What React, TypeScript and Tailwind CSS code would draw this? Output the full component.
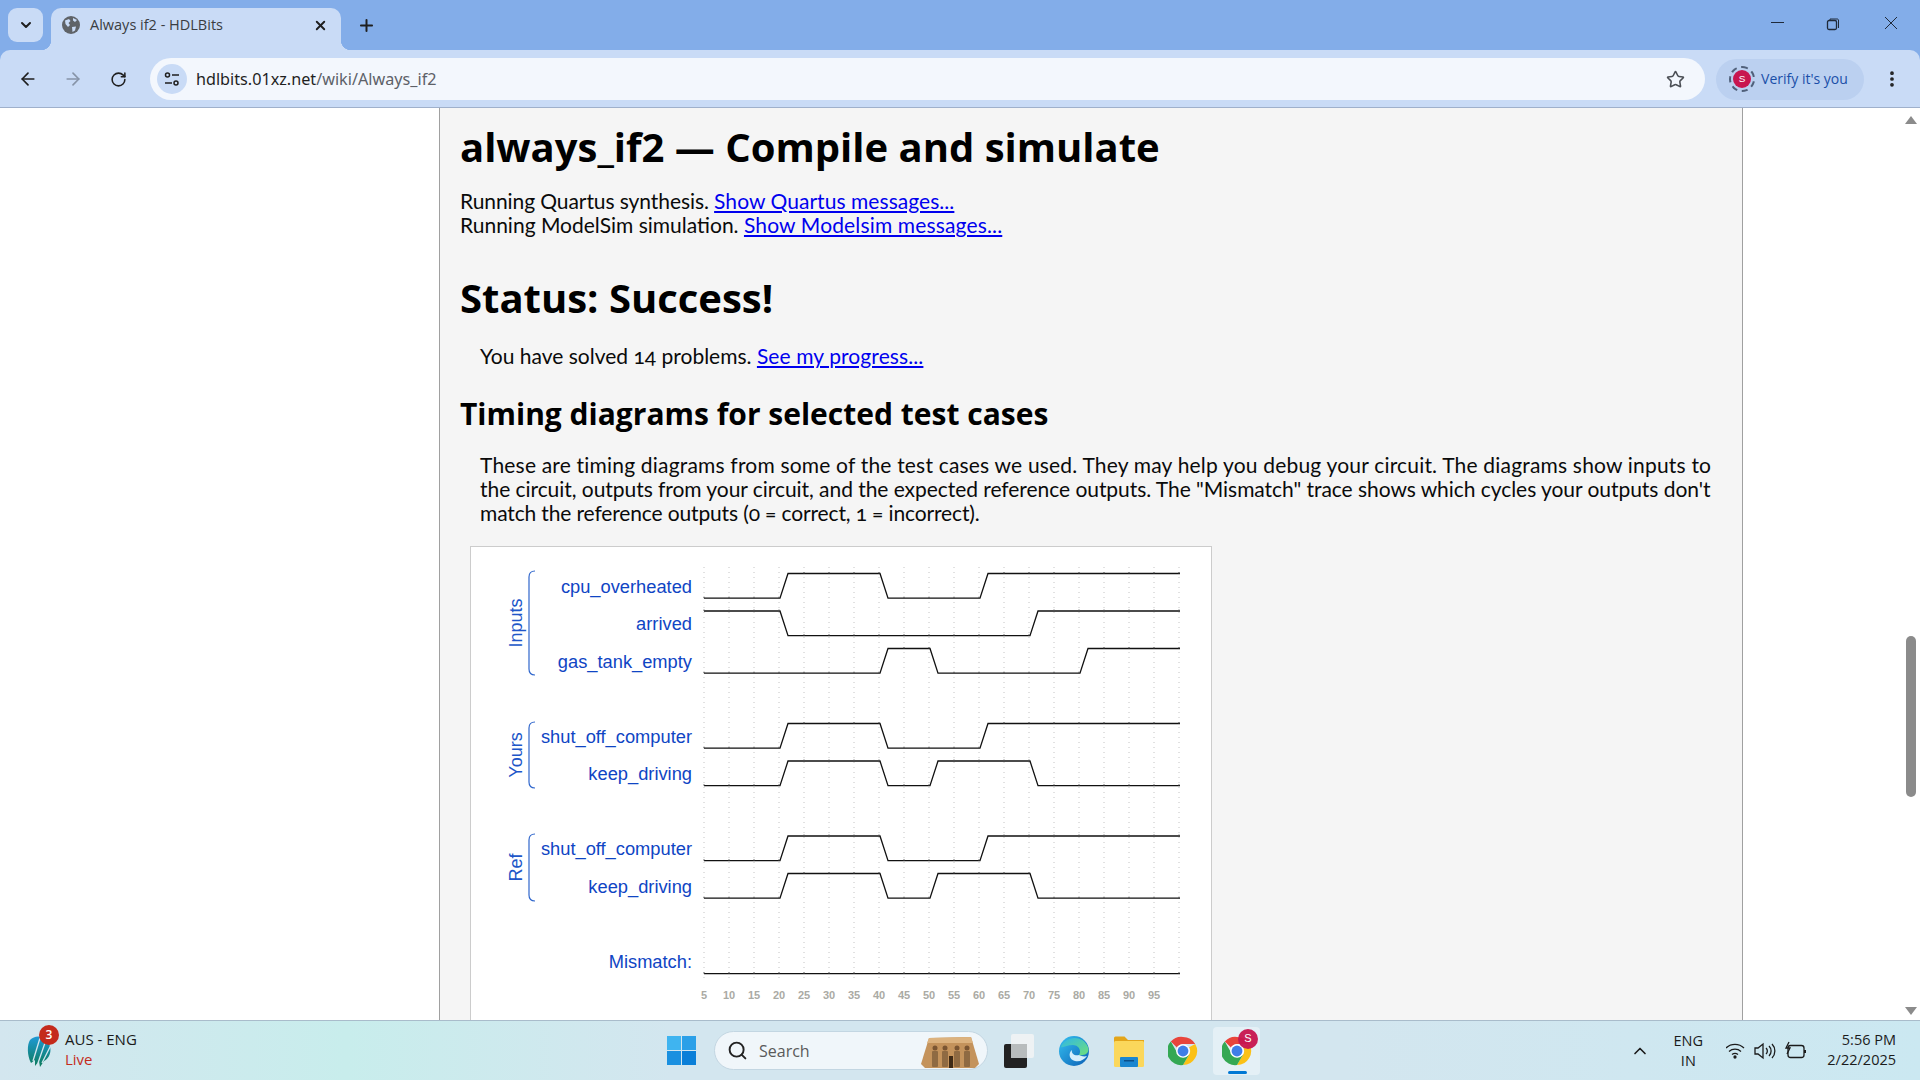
import React from 'react';
import { ArrowLeft, ArrowRight, ChevronDown, ChevronUp, MoreVertical, Plus, RotateCw, Search, Star, X } from 'lucide-react';

const UI = "font-['Open_Sans','Noto_Sans',sans-serif]";

// chart x: t=5 at 704, 5px per unit
const tx = (t: number) => 704 + (t - 5) * 5;
const TICKS = Array.from({ length: 19 }, (_, i) => 5 + i * 5);

const SIGNALS = [
  { name: 'cpu_overheated', hi: 573.5, base: 593, start: 0, edges: [20, 40, 60] },
  { name: 'arrived', hi: 611, base: 630, start: 1, edges: [20, 70] },
  { name: 'gas_tank_empty', hi: 648.5, base: 668, start: 0, edges: [40, 50, 80] },
  { name: 'shut_off_computer', hi: 723.5, base: 743, start: 0, edges: [20, 40, 60] },
  { name: 'keep_driving', hi: 761, base: 780, start: 0, edges: [20, 40, 50, 70] },
  { name: 'shut_off_computer', hi: 836, base: 855, start: 0, edges: [20, 40, 60] },
  { name: 'keep_driving', hi: 873.5, base: 893, start: 0, edges: [20, 40, 50, 70] },
  { name: 'Mismatch:', hi: 949, base: 968, start: 0, edges: [] as number[] },
];

const GROUPS = [
  { name: 'Inputs', top: 571, bottom: 675 },
  { name: 'Yours', top: 722, bottom: 788 },
  { name: 'Ref', top: 834, bottom: 901 },
];

function wave(hi: number, start: number, edges: number[]) {
  const lo = hi + 24.7;
  let level = start;
  let d = `M704 ${level ? hi : lo}`;
  for (const e of edges) {
    const x = tx(e) + 1;
    d += ` L${x} ${level ? hi : lo}`;
    level = level ? 0 : 1;
    d += ` L${x + 8} ${level ? hi : lo}`;
  }
  return d + ` L1180 ${level ? hi : lo}`;
}

// small tick on the trace at every grid line
function traceTicks(hi: number, start: number, edges: number[]) {
  const lo = hi + 24.7;
  let d = '';
  for (const t of TICKS.concat(100)) {
    const flips = edges.filter(e => e < t).length;
    const level = flips % 2 ? 1 - start : start;
    const y = level ? hi : lo;
    d += `M${tx(t)} ${y - 1.5}v1.5`;
  }
  return d;
}

function TimingChart() {
  return (
    <svg viewBox="471 547 740 490" className="block h-[490px] w-[740px]">
      {TICKS.concat(100).map(t => (
        <line key={t} x1={tx(t)} x2={tx(t)} y1={567} y2={980} stroke="#c4c4c4" strokeWidth={1} strokeDasharray="1 4" />
      ))}
      {SIGNALS.map((s, i) => (
        <g key={i}>
          <path d={wave(s.hi, s.start, s.edges)} fill="none" stroke="#111" strokeWidth={1.3} />
          <path d={traceTicks(s.hi, s.start, s.edges)} fill="none" stroke="#555" strokeWidth={1} />
          <text x={692} y={s.base} textAnchor="end" fontFamily="'Liberation Sans', Arial, sans-serif" fontSize={18.3} fill="#0f45c4">
            {s.name}
          </text>
        </g>
      ))}
      {GROUPS.map(g => {
        const mid = (g.top + g.bottom) / 2;
        return (
          <g key={g.name}>
            <path
              d={`M535 ${g.top} Q529 ${g.top} 529 ${g.top + 6} L529 ${g.bottom - 6} Q529 ${g.bottom} 535 ${g.bottom}`}
              fill="none"
              stroke="#2f66cc"
              strokeWidth={1.2}
            />
            <text
              transform={`translate(522 ${mid}) rotate(-90)`}
              textAnchor="middle"
              fontFamily="'Liberation Sans', Arial, sans-serif"
              fontSize={18}
              fill="#2056c8"
            >
              {g.name}
            </text>
          </g>
        );
      })}
      {TICKS.map(t => (
        <text key={t} x={tx(t)} y={999} textAnchor="middle" fontFamily="'Liberation Sans', Arial, sans-serif" fontSize={11} fontWeight={700} fill="#aaaaa4">
          {t}
        </text>
      ))}
    </svg>
  );
}

function Globe() {
  return (
    <svg viewBox="0 0 18 18" className="h-[18px] w-[18px]">
      <circle cx="9" cy="9" r="9" fill="#5f6368" />
      <path d="M3 4.5 L7 3 L8.5 5 L6.5 7 L8 9 L6 11 L3.5 8 Z M10 11 L14 10.5 L13 14.5 L10.5 16 Z M11 2 L15 4 L13 6 L11 4.5 Z" fill="#c9dbf6" />
    </svg>
  );
}

function TuneIcon() {
  return (
    <svg viewBox="0 0 18 18" className="h-[18px] w-[18px]" fill="none" stroke="#1f1f1f" strokeWidth="1.5">
      <circle cx="4.5" cy="5" r="2" />
      <path d="M9 5h7M2 13h7" />
      <circle cx="13" cy="13" r="2" />
    </svg>
  );
}

function ChromeLogo({ size }: { size: number }) {
  return (
    <svg viewBox="0 0 32 32" width={size} height={size}>
      <path d="M16 1a15 15 0 0 1 13 7.5H16a7.5 7.5 0 0 0-6.5 3.75L3 5.9A15 15 0 0 1 16 1z" fill="#e8453c" />
      <path d="M29 8.500a15 15 0 0 1-13 22.500l6.500-11.250A7.500 7.500 0 0 0 22.500 12z" fill="#fbc116" />
      <path d="M3 5.900l6.500 11.350A7.500 7.500 0 0 0 22.500 19.750L16 31A15 15 0 0 1 3 5.900z" fill="#34a853" />
      <circle cx="16" cy="16" r="7.300" fill="#fff" />
      <circle cx="16" cy="16" r="5.800" fill="#3f7ee8" />
    </svg>
  );
}

function Abusimbel() {
  return (
    <svg viewBox="0 0 60 34" className="h-[34px] w-[60px]">
      <path d="M8 4 L50 3 L58 30 L54 34 L4 34 L0 30 Z" fill="#c4935c" />
      <path d="M8 4 L50 3 L52 9 L6 9 Z" fill="#dcb27e" />
      {[14, 24, 36, 46].map(x => (
        <g key={x}>
          <circle cx={x} cy="14" r="2.500" fill="#7a5532" />
          <rect x={x - 3} y="17" width="6" height="16" rx="1" fill="#8f6a42" />
        </g>
      ))}
      <rect x="28" y="22" width="4" height="12" fill="#3f2a16" />
    </svg>
  );
}

function Edge() {
  return (
    <svg viewBox="0 0 32 32" className="h-[32px] w-[32px]">
      <defs>
        <linearGradient id="edgeA" x1="0" y1="0" x2="1" y2="1">
          <stop offset="0" stopColor="#35c1f1" />
          <stop offset="1" stopColor="#0b5fb5" />
        </linearGradient>
        <linearGradient id="edgeB" x1="0" y1="0" x2="1" y2="1">
          <stop offset="0" stopColor="#2fb6e8" />
          <stop offset="1" stopColor="#6ee07a" />
        </linearGradient>
      </defs>
      <circle cx="16" cy="16" r="15" fill="url(#edgeA)" />
      <path d="M3 12 C6 2 24 -2 30 12 C32 19 26 21 21 20 C24 15 20 10 15 10 C9 10 5 13 3 12z" fill="url(#edgeB)" />
      <path d="M21 20 C17 21 13 19 14 15 C10 18 11 25 17 26 C22 27 26 25 29 21 C26 22 23 21 21 20z" fill="#d5eefb" />
    </svg>
  );
}

function Folder() {
  return (
    <svg viewBox="0 0 30 32" className="h-[32px] w-[30px]">
      <path d="M0 3a1.500 1.500 0 0 1 1.500-1.500h9L14 5h16v6H0z" fill="#e3a51a" />
      <rect x="0" y="6" width="30" height="26" rx="1.500" fill="#fbd75b" />
      <rect x="6" y="22" width="18" height="10" rx="1" fill="#1a86d0" />
      <rect x="10" y="25" width="10" height="1.500" fill="#0a4f8a" />
    </svg>
  );
}

function Avatar({ size, cls }: { size: number; cls: string }) {
  return (
    <span
      className={`${cls} flex items-center justify-center rounded-full bg-[#c8164f] text-white font-['Liberation_Sans',sans-serif]`}
      style={{ width: size, height: size, fontSize: size * 0.55 }}
    >
      S
    </span>
  );
}

function BrowserChrome() {
  return (
    <header className={`${UI} h-[108px] shrink-0 bg-[#83ade9]`}>
      {/* tab strip */}
      <div className="flex h-[50px] items-start pt-2">
        <div className="ml-2 flex h-[34px] w-[35px] items-center justify-center rounded-[9px] bg-[#c9dbf6]">
          <ChevronDown size={16} strokeWidth={3} className="text-[#1f1f1f]" />
        </div>
        <div className="relative ml-2 flex h-[42px] w-[290px] items-center rounded-t-[10px] bg-[#c9dbf6] pb-2 pl-[11px] pr-[13px]">
          <span className="absolute bottom-0 left-[-10px] h-[10px] w-[10px] bg-[radial-gradient(circle_at_0_0,#83ade9_10px,#c9dbf6_10.5px)]" />
          <span className="absolute bottom-0 right-[-10px] h-[10px] w-[10px] bg-[radial-gradient(circle_at_100%_0,#83ade9_10px,#c9dbf6_10.5px)]" />
          <Globe />
          <span className="ml-[10px] flex-1 text-[14.500px] text-[#3a3d42]">Always if2 - HDLBits</span>
          <X size={15} strokeWidth={3} className="text-[#1f1f1f]" />
        </div>
        <Plus size={19} strokeWidth={2.500} className="ml-[16px] mt-[8px] text-[#1f1f1f]" />
        <div className="flex-1" />
        <svg viewBox="0 0 170 20" className="mt-[8px] h-5 w-[170px]" fill="none" stroke="#1f2a3a" strokeWidth="1">
          <path d="M21 6.500h13" />
          <rect x="77.500" y="4.500" width="9" height="9" rx="1.500" strokeWidth="1.300" />
          <path d="M80 4V3h7.500a1.500 1.500 0 0 1 1 1v8" />
          <path d="M135 1l12 12M147 1l-12 12" />
        </svg>
      </div>
      {/* toolbar */}
      <div className="flex h-[57px] items-center rounded-t-[10px] bg-[#c9dbf6] pl-[18px] pr-[18px] pt-[1px]">
        <ArrowLeft size={20} strokeWidth={2} className="text-[#1f1f1f]" />
        <ArrowRight size={20} strokeWidth={2} className="ml-[25px] text-[#8794a8]" />
        <RotateCw size={17} strokeWidth={2.200} className="ml-[27px] text-[#1f1f1f]" />
        <div className="ml-[23px] flex h-[42px] w-[1556px] items-center rounded-full bg-[#f3f7fd] pl-[7px] pr-[20px]">
          <span className="flex h-[30px] w-[30px] items-center justify-center rounded-full bg-[#c9dbf6]">
            <TuneIcon />
          </span>
          <span className="ml-[9px] flex-1 text-[16.200px] text-[#1f1f1f] font-['Noto_Sans',sans-serif]">
            hdlbits.01xz.net<span className="text-[#5d6168]">/wiki/Always_if2</span>
          </span>
          <Star size={19} strokeWidth={2} className="text-[#4b4f55]" />
        </div>
        <div className="ml-[11px] flex h-[41px] w-[148px] items-center rounded-full bg-[#bbd0f0] pl-[13px]">
          <span className="flex h-[26px] w-[26px] items-center justify-center rounded-full border-2 border-dashed border-[#50607a]">
            <Avatar size={18} cls="" />
          </span>
          <span className="mb-[2px] ml-[6px] text-[14px] text-[#1a4fa8]">Verify it's you</span>
        </div>
        <MoreVertical size={20} strokeWidth={2.500} className="ml-[18px] text-[#1f1f1f]" />
      </div>
      <div className="h-px bg-[#9fb0cb]" />
    </header>
  );
}

function Page() {
  const body = "font-['Lato','Open_Sans',sans-serif] text-[21px] leading-[24px] text-[#0a0a0a] [font-variant-numeric:oldstyle-nums]";
  const link = 'text-[#0000ee] underline';
  return (
    <div className="flex h-[912px] shrink-0 overflow-hidden bg-white">
      <div className="w-[439px] shrink-0" />
      <main className="w-[1304px] shrink-0 overflow-hidden border-x border-[#a0a0a0] bg-[#f5f5f5] pl-5">
        <h1 className="mt-[11px] font-['Open_Sans',sans-serif] text-[40px] font-bold leading-[56px] text-black">
          always_if2 — Compile and simulate
        </h1>
        <p className={`${body} mt-[14px]`}>
          <span className="tracking-[-0.08px]">Running Quartus synthesis. </span>
          <a className={`${link} tracking-[0.05px]`}>Show Quartus messages...</a>
          <br />
          Running ModelSim simulation. <a className={`${link} tracking-[0.15px]`}>Show Modelsim messages...</a>
        </p>
        <h2 className="mt-[33px] font-['Open_Sans',sans-serif] text-[40px] font-bold leading-[56px] text-black">Status: Success!</h2>
        <p className={`${body} mt-[18px] pl-5`}>
          You have solved 14 problems. <a className={`${link} tracking-[0.1px]`}>See my progress...</a>
        </p>
        <h3 className="mt-[25px] font-['Open_Sans',sans-serif] text-[30px] font-bold leading-[42px] text-black">
          Timing diagrams for selected test cases
        </h3>
        <p className={`${body} mt-[18px] whitespace-nowrap pl-5`}>
          <span className="block tracking-[0.19px]">
            These are timing diagrams from some of the test cases we used. They may help you debug your circuit. The diagrams show inputs to
          </span>
          <span className="block tracking-[-0.05px]">
            the circuit, outputs from your circuit, and the expected reference outputs. The "Mismatch" trace shows which cycles your outputs don't
          </span>
          <span className="block tracking-[-0.14px]">match the reference outputs (0 = correct, 1 = incorrect).</span>
        </p>
        <div className="ml-[10px] mt-[21px] w-[742px] border border-[#cccccc] bg-white">
          <TimingChart />
        </div>
      </main>
      <div className="flex flex-1 justify-end">
        <div className="flex w-[19px] flex-col items-center">
          <div className="mt-[8px] h-0 w-0 border-x-[6px] border-b-[8px] border-x-transparent border-b-[#8b8b8b]" />
          <div className="mt-[512px] h-[161px] w-[10px] rounded-full bg-[#8b8b8b]" />
          <div className="mt-[210px] h-0 w-0 border-x-[6px] border-t-[8px] border-x-transparent border-t-[#8b8b8b]" />
        </div>
      </div>
    </div>
  );
}

function Taskbar() {
  return (
    <footer className={`${UI} flex h-[60px] shrink-0 items-center border-t border-[#a9bccb] bg-[linear-gradient(90deg,#d3e6ef,#c8edec_18%,#d3e6ef_35%,#d3e6ef_70%,#cbe8f1)] text-[#1b1b1b]`}>
      {/* weather widget */}
      <div className="relative ml-[27px] flex w-[640px] items-center">
        <svg viewBox="0 0 26 32" className="h-[32px] w-[26px]">
          <defs>
            <linearGradient id="logoG" x1="0" y1="0" x2="0" y2="1">
              <stop offset="0" stopColor="#1f9ad6" />
              <stop offset="1" stopColor="#0c7a58" />
            </linearGradient>
          </defs>
          <path d="M3 5 C7 1 13 0 18 4 C26 10 25 22 17 26 L13 32 L12 26 L8 31 L8 25 L4 28 C0 20 0 10 3 5z" fill="url(#logoG)" />
          <path d="M13 3 L6 26 M19 5 L11 28 M24 10 L15 28" stroke="#d3e6ef" strokeWidth="1.300" />
        </svg>
        <span className="absolute left-[12px] top-[-4px] flex h-[20px] w-[20px] items-center justify-center rounded-full bg-[#c42b1c] text-[12px] font-semibold text-white">3</span>
        <div className="mb-[3px] ml-[12px] text-[15px] leading-[20px]">
          <div>AUS - ENG</div>
          <div className="text-[#c42b1c]">Live</div>
        </div>
      </div>
      {/* start button */}
      <div className="grid h-[29px] w-[29px] grid-cols-2 gap-[1.500px]">
        <span className="bg-[#3fb4f0]" />
        <span className="bg-[#2ba0e8]" />
        <span className="bg-[#1a90e0]" />
        <span className="bg-[#0a7fd8]" />
      </div>
      <div className="ml-[18px] flex h-[39px] w-[274px] items-center rounded-full border border-[#c3d6e2] bg-[#f0f6fa] pl-[12px] pr-[6px]">
        <Search size={21} strokeWidth={2.200} className="text-[#222]" />
        <span className="ml-[11px] flex-1 text-[16px] text-[#5a5a5a]">Search</span>
        <Abusimbel />
      </div>
      <div className="relative ml-[16px] h-[34px] w-[30px]">
        <span className="absolute left-[7px] top-0 h-[24px] w-[23px] rounded-[2px] bg-[#eef2f4]" />
        <span className="absolute bottom-0 left-0 h-[24px] w-[23px] rounded-[2px] bg-[#222]" />
        <span className="absolute left-[7px] top-[10px] h-[14px] w-[16px] bg-[#b8bcbd]" />
      </div>
      <div className="ml-[24px]"><Edge /></div>
      <div className="ml-[24px]"><Folder /></div>
      <div className="ml-[24px]"><ChromeLogo size={30} /></div>
      <div className="relative ml-[15px] flex h-[48px] w-[47px] items-center justify-center rounded-[4px] bg-[#e4f0f6]">
        <ChromeLogo size={30} />
        <Avatar size={20} cls="absolute right-[2px] top-[2px] opacity-95" />
        <span className="absolute bottom-[1px] left-[15px] h-[3px] w-[19px] rounded-full bg-[#0078d4]" />
      </div>
      <div className="flex-1" />
      {/* tray */}
      <ChevronUp size={20} strokeWidth={2} className="mr-[23px]" />
      <div className="w-[30px] text-center text-[14.500px] leading-[20px]">
        <div>ENG</div>
        <div>IN</div>
      </div>
      <svg viewBox="0 0 80 20" className="ml-[23px] h-5 w-[80px]" fill="none" stroke="#1b1b1b" strokeWidth="1.300">
        <path d="M0 7a13 13 0 0 1 18 0M3 10.500a9 9 0 0 1 12 0M6 13.500a5 5 0 0 1 6 0" />
        <circle cx="9" cy="16" r="1" fill="#1b1b1b" />
        <path d="M29 7h3l5-4v14l-5-4h-3z" />
        <path d="M40 7a4 4 0 0 1 0 6M43 5a7 7 0 0 1 0 10M46 3a10 10 0 0 1 0 14" />
        <rect x="62" y="4.500" width="16" height="12" rx="2.500" />
        <path d="M79 9v3" strokeWidth="2" />
        <path d="M63 1l-3 6h4l-3 6" fill="none" stroke="#1b1b1b" />
      </svg>
      <div className="mb-[2px] ml-[21px] mr-[24px] text-right text-[14.500px] leading-[20px]">
        <div>5:56 PM</div>
        <div>2/22/2025</div>
      </div>
    </footer>
  );
}

export default function App() {
  return (
    <div className="flex h-[1080px] w-[1920px] flex-col overflow-hidden">
      <BrowserChrome />
      <Page />
      <Taskbar />
    </div>
  );
}
